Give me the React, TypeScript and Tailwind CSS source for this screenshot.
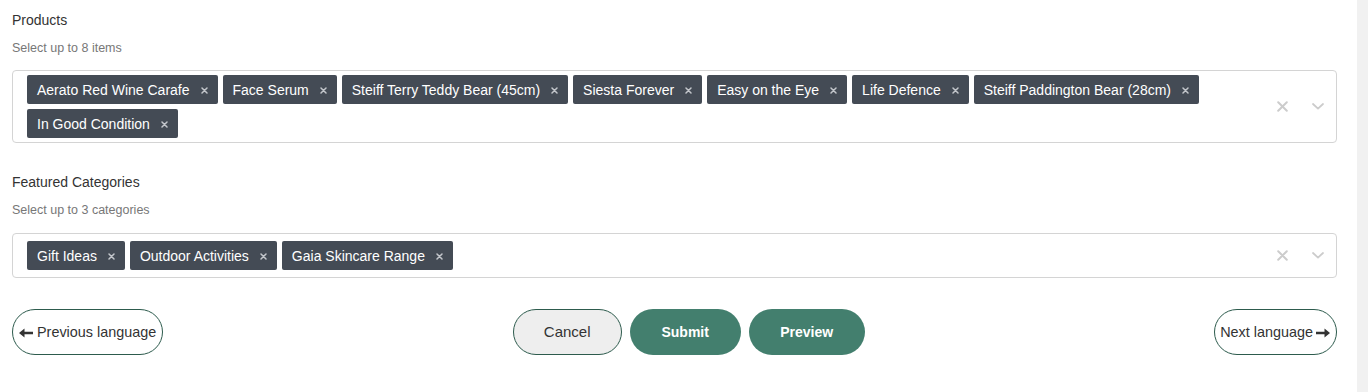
import React from "react";

const products = [
  "Aerato Red Wine Carafe",
  "Face Serum",
  "Steiff Terry Teddy Bear (45cm)",
  "Siesta Forever",
  "Easy on the Eye",
  "Life Defence",
  "Steiff Paddington Bear (28cm)",
  "In Good Condition",
];

const categories = ["Gift Ideas", "Outdoor Activities", "Gaia Skincare Range"];

function Tag({ label }: { label: string }) {
  return (
    <div className="flex h-[29px] items-center rounded-[2px] bg-[#444b55] pl-[10px] pr-[10px] pt-[1px] text-[14px] leading-[17px] text-white">
      <span>{label}</span>
      <svg className="ml-[11px]" width="7" height="7" viewBox="0 0 7 7">
        <path d="M1 1L6 6M6 1L1 6" stroke="#c3c6cb" strokeWidth="1.5" strokeLinecap="round" />
      </svg>
    </div>
  );
}

function MultiSelect({ items }: { items: string[] }) {
  return (
    <div className="flex min-h-[45px] items-center rounded-[4px] border border-[#d4d4d4] bg-white">
      <div className="flex flex-1 flex-wrap gap-[5px] py-[4px] pl-[14px]">
        {items.map((t) => (
          <Tag key={t} label={t} />
        ))}
      </div>
      <div className="flex self-stretch items-center">
        <div className="flex w-[36px] items-center justify-center">
          <svg width="11" height="11" viewBox="0 0 11 11">
            <path d="M1.2 1.2L9.8 9.8M9.8 1.2L1.2 9.8" stroke="#cccccc" strokeWidth="2" strokeLinecap="round" />
          </svg>
        </div>
        <div className="flex w-[36px] items-center justify-center">
          <svg width="12" height="7" viewBox="0 0 12 7">
            <path d="M1 1L6 5.6L11 1" fill="none" stroke="#cccccc" strokeWidth="1.8" strokeLinecap="round" strokeLinejoin="round" />
          </svg>
        </div>
      </div>
    </div>
  );
}

function ArrowLeft() {
  return (
    <svg width="14" height="10" viewBox="0 0 14 10">
      <polygon points="0,5 5.5,0.6 5.5,3.7 14,3.7 14,6.3 5.5,6.3 5.5,9.4" fill="#333333" />
    </svg>
  );
}

function ArrowRight() {
  return (
    <svg width="14" height="10" viewBox="0 0 14 10">
      <polygon points="14,5 8.5,0.6 8.5,3.7 0,3.7 0,6.3 8.5,6.3 8.5,9.4" fill="#333333" />
    </svg>
  );
}

export default function App() {
  return (
    <div className="flex h-[392px] w-[1368px] bg-white font-['Liberation_Sans',Arial,sans-serif]">
      <div className="flex-1 pl-3 pr-[20px] pt-[10px]">
        <section>
          <div className="text-[14px] leading-[20px] text-[#333333]">Products</div>
          <div className="mt-[9px] text-[12.5px] leading-[18px] text-[#777777]">Select up to 8 items</div>
          <div className="mt-[13px]">
            <MultiSelect items={products} />
          </div>
        </section>
        <section className="mt-[29px]">
          <div className="text-[14px] leading-[20px] text-[#333333]">Featured Categories</div>
          <div className="mt-[9px] text-[12.5px] leading-[18px] text-[#777777]">Select up to 3 categories</div>
          <div className="mt-[14px]">
            <MultiSelect items={categories} />
          </div>
        </section>
        <div className="mt-[31px] flex items-center justify-between">
          <button className="flex h-[46px] items-center gap-[4px] rounded-full border border-[#2d5b4d] bg-white pl-[6px] pr-[6px] pt-[1px] text-[14.4px] text-[#333333]">
            <ArrowLeft />
            <span>Previous language</span>
          </button>
          <div className="flex items-center gap-[8px]">
            <button className="h-[46px] w-[109px] rounded-full border border-[#2d5b4d] bg-[#eeeeee] pt-[1px] text-[15px] text-[#333333]">
              Cancel
            </button>
            <button className="h-[46px] w-[111px] rounded-full bg-[#437f6e] pt-[1px] text-[14px] font-bold text-white">
              Submit
            </button>
            <button className="h-[46px] w-[116px] rounded-full bg-[#437f6e] pt-[1px] text-[14px] font-bold text-white">
              Preview
            </button>
          </div>
          <button className="flex h-[46px] items-center gap-[3px] rounded-full border border-[#2d5b4d] bg-white pl-[5px] pr-[6px] pt-[1px] text-[14.4px] text-[#333333]">
            <span>Next language</span>
            <ArrowRight />
          </button>
        </div>
      </div>
      <div className="w-[11px] bg-[#f1f1f1]" />
    </div>
  );
}
